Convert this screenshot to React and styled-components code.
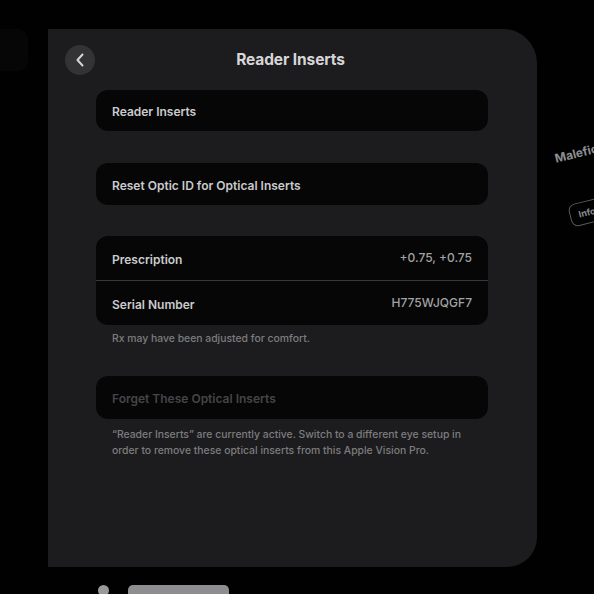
import React from "react";
import styled, { createGlobalStyle } from "styled-components";

const Global = createGlobalStyle`
  html, body { margin: 0; padding: 0; background: #000; }
  body { font-family: Inter, "Noto Sans", sans-serif; -webkit-font-smoothing: antialiased; }
`;

const Stage = styled.div`
  width: 594px;
  height: 594px;
  overflow: hidden;
  background: #010102;
  display: grid;
  grid-template-columns: 48px 489px 57px;
  grid-template-rows: 29px 538px 27px;
`;

const LeftGhost = styled.div`
  grid-column: 1;
  grid-row: 2;
`;

const GhostCard = styled.div`
  width: 32px;
  height: 42px;
  margin-left: -4px;
  border-radius: 0 10px 10px 0;
  background: #060607;
`;

const Panel = styled.div`
  grid-column: 2;
  grid-row: 2;
  background: #1c1c1e;
  border-radius: 0 34px 30px 0;
  display: flex;
  flex-direction: column;
  padding-top: 16px;
  box-sizing: border-box;
`;

const Header = styled.div`
  display: grid;
  grid-template-columns: 30px 1fr 30px;
  align-items: center;
  padding: 0 17px;
  height: 30px;
`;

const BackButton = styled.div`
  width: 30px;
  height: 30px;
  border-radius: 50%;
  background: #333335;
  display: flex;
  align-items: center;
  justify-content: center;
`;

const Title = styled.div`
  text-align: center;
  color: #d6d6d8;
  font-size: 15.5px;
  font-weight: 700;
  letter-spacing: -0.1px;
  margin-left: -4px;
  margin-top: -1px;
`;

const Content = styled.div`
  display: flex;
  flex-direction: column;
  margin-left: 48px;
  width: 392px;
`;

const Card = styled.div`
  background: #060607;
  border-radius: 12px;
  margin-top: ${(p) => p.$mt}px;
  overflow: hidden;
`;

const Row = styled.div`
  height: ${(p) => p.$h || 42}px;
  display: flex;
  align-items: center;
  justify-content: space-between;
  padding: 2px 16px 0;
  box-sizing: border-box;
`;

const Label = styled.span`
  font-size: 12px;
  font-weight: 600;
  color: ${(p) => (p.$disabled ? "#454547" : "#cbcbcd")};
`;

const Value = styled.span`
  font-size: 12px;
  font-weight: 500;
  color: #a2a2a4;
  margin-top: -3px;
`;

const Separator = styled.div`
  height: 1px;
  background: #38383a;
`;

const Note = styled.p`
  margin: ${(p) => p.$mt}px 0 0 16px;
  font-size: 10.4px;
  font-weight: 500;
  line-height: 16px;
  color: #7c7c7e;
  white-space: nowrap;
`;

const RightSide = styled.div`
  grid-column: 3;
  grid-row: 2;
  position: relative;
  overflow: hidden;
`;

const SideTitle = styled.div`
  position: absolute;
  left: 18px;
  top: 122px;
  transform: rotate(-14deg);
  transform-origin: left center;
  font-size: 12px;
  font-weight: 700;
  color: #8e8e90;
  white-space: nowrap;
`;

const SideChip = styled.div`
  position: absolute;
  left: 33px;
  top: 176px;
  transform: rotate(-14deg);
  transform-origin: left center;
  border: 1.5px solid #5a5a5c;
  border-radius: 7px;
  padding: 5px 8px;
  font-size: 9px;
  font-weight: 700;
  color: #8e8e90;
  white-space: nowrap;
`;

const Dock = styled.div`
  grid-column: 2;
  grid-row: 3;
  display: flex;
  align-items: flex-start;
  gap: 19px;
  padding: 18px 0 0 50px;
`;

const DockDot = styled.div`
  width: 11px;
  height: 11px;
  border-radius: 50%;
  background: #9a9a9c;
`;

const DockPill = styled.div`
  width: 101px;
  height: 10px;
  border-radius: 5px 5px 0 0;
  background: #8e8e90;
`;

export default function App() {
  return (
    <>
      <Global />
      <Stage>
        <LeftGhost>
          <GhostCard />
        </LeftGhost>
        <Panel>
          <Header>
            <BackButton>
              <svg width="10" height="14" viewBox="0 0 10 14" fill="none">
                <path d="M7.5 1.5 L2.5 7 L7.5 12.5" stroke="#d4d4d6" strokeWidth="2" strokeLinecap="round" strokeLinejoin="round" />
              </svg>
            </BackButton>
            <Title>Reader Inserts</Title>
            <span />
          </Header>
          <Content>
            <Card $mt={15}>
              <Row $h={41}>
                <Label>Reader Inserts</Label>
              </Row>
            </Card>
            <Card $mt={32}>
              <Row $h={42}>
                <Label>Reset Optic ID for Optical Inserts</Label>
              </Row>
            </Card>
            <Card $mt={31}>
              <Row $h={44}>
                <Label>Prescription</Label>
                <Value>+0.75, +0.75</Value>
              </Row>
              <Separator />
              <Row $h={44}>
                <Label>Serial Number</Label>
                <Value>H775WJQGF7</Value>
              </Row>
            </Card>
            <Note $mt={6}>Rx may have been adjusted for comfort.</Note>
            <Card $mt={29}>
              <Row $h={43}>
                <Label $disabled>Forget These Optical Inserts</Label>
              </Row>
            </Card>
            <Note $mt={8}>
              “Reader Inserts” are currently active. Switch to a different eye setup in
              <br />
              order to remove these optical inserts from this Apple Vision Pro.
            </Note>
          </Content>
        </Panel>
        <RightSide>
          <SideTitle>Malefic</SideTitle>
          <SideChip>Info</SideChip>
        </RightSide>
        <Dock>
          <DockDot />
          <DockPill />
        </Dock>
      </Stage>
    </>
  );
}
